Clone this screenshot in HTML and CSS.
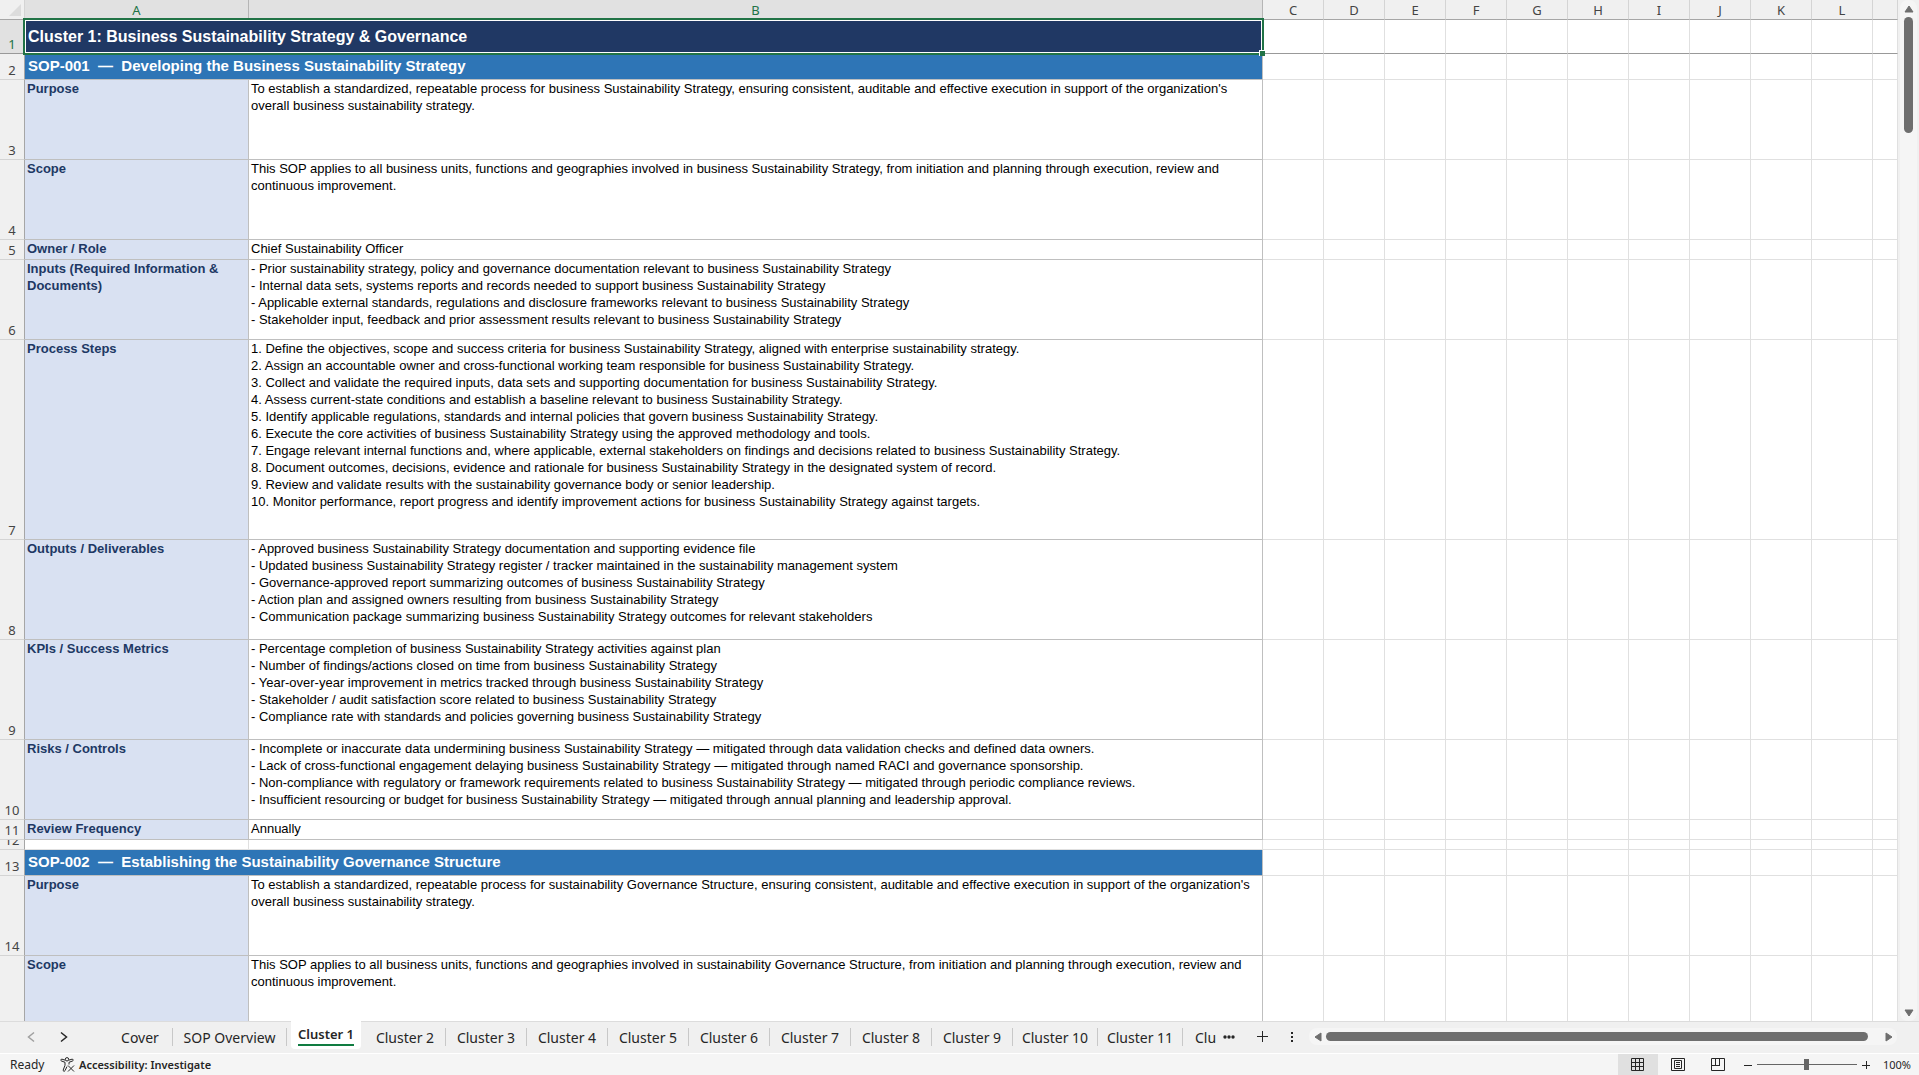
FILE: index.html
```html
<!DOCTYPE html>
<html lang="en">
<head>
<meta charset="utf-8">
<title>Cluster 1</title>
<link rel="stylesheet" href="styles.css">
</head>
<body>
<div class="app">
  <main class="workspace">
    <div class="sheet">
      <table class="grid">
        <colgroup>
          <col class="col-num"><col class="col-a"><col class="col-b">
          <col class="col-std" span="10"><col>
        </colgroup>
        <thead>
          <tr>
            <th class="corner"><svg width="13" height="13" viewBox="0 0 13 13"><path d="M12 0V12H0z" fill="#dcdcdc"/></svg></th>
            <th class="on" scope="col">A</th><th class="on" scope="col">B</th><th scope="col">C</th><th scope="col">D</th><th scope="col">E</th><th scope="col">F</th><th scope="col">G</th><th scope="col">H</th><th scope="col">I</th><th scope="col">J</th><th scope="col">K</th><th scope="col">L</th><th></th>
          </tr>
        </thead>
        <tbody>
          <tr class="h34 frozen"><th class="on" scope="row">1</th><td class="title" colspan="2">Cluster 1: Business Sustainability Strategy &amp; Governance<span class="selection"><span class="handle"></span></span></td><td></td><td></td><td></td><td></td><td></td><td></td><td></td><td></td><td></td><td></td><td></td></tr>
          <tr class="h26"><th scope="row">2</th><td class="band" colspan="2">SOP-001&nbsp; —&nbsp; Developing the Business Sustainability Strategy</td><td></td><td></td><td></td><td></td><td></td><td></td><td></td><td></td><td></td><td></td><td></td></tr>
          <tr class="h80"><th scope="row">3</th><td class="label">Purpose</td><td class="body">To establish a standardized, repeatable process for business Sustainability Strategy, ensuring consistent, auditable and effective execution in support of the organization's<br>overall business sustainability strategy.</td><td></td><td></td><td></td><td></td><td></td><td></td><td></td><td></td><td></td><td></td><td></td></tr>
          <tr class="h80"><th scope="row">4</th><td class="label">Scope</td><td class="body">This SOP applies to all business units, functions and geographies involved in business Sustainability Strategy, from initiation and planning through execution, review and<br>continuous improvement.</td><td></td><td></td><td></td><td></td><td></td><td></td><td></td><td></td><td></td><td></td><td></td></tr>
          <tr class="h20"><th scope="row">5</th><td class="label">Owner / Role</td><td class="body">Chief Sustainability Officer</td><td></td><td></td><td></td><td></td><td></td><td></td><td></td><td></td><td></td><td></td><td></td></tr>
          <tr class="h80"><th scope="row">6</th><td class="label">Inputs (Required Information &amp;<br>Documents)</td><td class="body">- Prior sustainability strategy, policy and governance documentation relevant to business Sustainability Strategy<br>- Internal data sets, systems reports and records needed to support business Sustainability Strategy<br>- Applicable external standards, regulations and disclosure frameworks relevant to business Sustainability Strategy<br>- Stakeholder input, feedback and prior assessment results relevant to business Sustainability Strategy</td><td></td><td></td><td></td><td></td><td></td><td></td><td></td><td></td><td></td><td></td><td></td></tr>
          <tr class="h200"><th scope="row">7</th><td class="label">Process Steps</td><td class="body">1. Define the objectives, scope and success criteria for business Sustainability Strategy, aligned with enterprise sustainability strategy.<br>2. Assign an accountable owner and cross-functional working team responsible for business Sustainability Strategy.<br>3. Collect and validate the required inputs, data sets and supporting documentation for business Sustainability Strategy.<br>4. Assess current-state conditions and establish a baseline relevant to business Sustainability Strategy.<br>5. Identify applicable regulations, standards and internal policies that govern business Sustainability Strategy.<br>6. Execute the core activities of business Sustainability Strategy using the approved methodology and tools.<br>7. Engage relevant internal functions and, where applicable, external stakeholders on findings and decisions related to business Sustainability Strategy.<br>8. Document outcomes, decisions, evidence and rationale for business Sustainability Strategy in the designated system of record.<br>9. Review and validate results with the sustainability governance body or senior leadership.<br>10. Monitor performance, report progress and identify improvement actions for business Sustainability Strategy against targets.</td><td></td><td></td><td></td><td></td><td></td><td></td><td></td><td></td><td></td><td></td><td></td></tr>
          <tr class="h100"><th scope="row">8</th><td class="label">Outputs / Deliverables</td><td class="body">- Approved business Sustainability Strategy documentation and supporting evidence file<br>- Updated business Sustainability Strategy register / tracker maintained in the sustainability management system<br>- Governance-approved report summarizing outcomes of business Sustainability Strategy<br>- Action plan and assigned owners resulting from business Sustainability Strategy<br>- Communication package summarizing business Sustainability Strategy outcomes for relevant stakeholders</td><td></td><td></td><td></td><td></td><td></td><td></td><td></td><td></td><td></td><td></td><td></td></tr>
          <tr class="h100"><th scope="row">9</th><td class="label">KPIs / Success Metrics</td><td class="body">- Percentage completion of business Sustainability Strategy activities against plan<br>- Number of findings/actions closed on time from business Sustainability Strategy<br>- Year-over-year improvement in metrics tracked through business Sustainability Strategy<br>- Stakeholder / audit satisfaction score related to business Sustainability Strategy<br>- Compliance rate with standards and policies governing business Sustainability Strategy</td><td></td><td></td><td></td><td></td><td></td><td></td><td></td><td></td><td></td><td></td><td></td></tr>
          <tr class="h80"><th scope="row">10</th><td class="label">Risks / Controls</td><td class="body">- Incomplete or inaccurate data undermining business Sustainability Strategy — mitigated through data validation checks and defined data owners.<br>- Lack of cross-functional engagement delaying business Sustainability Strategy — mitigated through named RACI and governance sponsorship.<br>- Non-compliance with regulatory or framework requirements related to business Sustainability Strategy — mitigated through periodic compliance reviews.<br>- Insufficient resourcing or budget for business Sustainability Strategy — mitigated through annual planning and leadership approval.</td><td></td><td></td><td></td><td></td><td></td><td></td><td></td><td></td><td></td><td></td><td></td></tr>
          <tr class="h20"><th scope="row">11</th><td class="label">Review Frequency</td><td class="body">Annually</td><td></td><td></td><td></td><td></td><td></td><td></td><td></td><td></td><td></td><td></td><td></td></tr>
          <tr class="h10"><th scope="row"><span class="clip">12</span></th><td></td><td></td><td></td><td></td><td></td><td></td><td></td><td></td><td></td><td></td><td></td><td></td><td></td></tr>
          <tr class="h26"><th scope="row">13</th><td class="band" colspan="2">SOP-002&nbsp; —&nbsp; Establishing the Sustainability Governance Structure</td><td></td><td></td><td></td><td></td><td></td><td></td><td></td><td></td><td></td><td></td><td></td></tr>
          <tr class="h80"><th scope="row">14</th><td class="label">Purpose</td><td class="body">To establish a standardized, repeatable process for sustainability Governance Structure, ensuring consistent, auditable and effective execution in support of the organization's<br>overall business sustainability strategy.</td><td></td><td></td><td></td><td></td><td></td><td></td><td></td><td></td><td></td><td></td><td></td></tr>
          <tr class="h80"><th scope="row"></th><td class="label">Scope</td><td class="body">This SOP applies to all business units, functions and geographies involved in sustainability Governance Structure, from initiation and planning through execution, review and<br>continuous improvement.</td><td></td><td></td><td></td><td></td><td></td><td></td><td></td><td></td><td></td><td></td><td></td></tr>
        </tbody>
      </table>
    </div>
    <div class="vscroll">
      <button class="arrow" aria-label="Scroll up"><svg width="10" height="8" viewBox="0 0 10 8"><path d="M5 1 9 7H1z"/></svg></button>
      <div class="vthumb"></div>
      <button class="arrow" aria-label="Scroll down"><svg width="10" height="8" viewBox="0 0 10 8"><path d="M1 1H9L5 7z"/></svg></button>
    </div>
  </main>

  <nav class="tabs" aria-label="Sheets">
    <div class="tabnav">
      <button aria-label="Previous sheet" disabled><svg width="8" height="12" viewBox="0 0 8 12"><path d="M7 1.500 1.500 6 7 10.500"/></svg></button>
      <button aria-label="Next sheet"><svg width="8" height="12" viewBox="0 0 8 12"><path d="M1 1.500 6.500 6 1 10.500"/></svg></button>
    </div>
    <div class="tablist">
      <button class="tab">Cover</button>
      <button class="tab">SOP Overview</button>
      <button class="tab active"><span>Cluster 1</span></button>
      <button class="tab">Cluster 2</button>
      <button class="tab">Cluster 3</button>
      <button class="tab">Cluster 4</button>
      <button class="tab">Cluster 5</button>
      <button class="tab">Cluster 6</button>
      <button class="tab">Cluster 7</button>
      <button class="tab">Cluster 8</button>
      <button class="tab">Cluster 9</button>
      <button class="tab wide">Cluster 10</button>
      <button class="tab wide">Cluster 11</button>
      <button class="tab cut">Clu</button>
    </div>
    <div class="tabtools">
      <button aria-label="More sheets"><svg width="12" height="4" viewBox="0 0 12 4"><circle cx="2" cy="2" r="1.700"/><circle cx="6" cy="2" r="1.700"/><circle cx="10" cy="2" r="1.700"/></svg></button>
      <button aria-label="New sheet"><svg width="12" height="12" viewBox="0 0 12 12"><path d="M5 0h1v5h5v1H6v5H5V6H0V5h5z"/></svg></button>
      <button aria-label="Resize"><svg width="2" height="10" viewBox="0 0 2 10"><path d="M0 0h2v2H0zM0 4h2v2H0zM0 8h2v2H0z"/></svg></button>
    </div>
    <div class="hscroll">
      <button class="arrow" aria-label="Scroll left"><svg width="8" height="10" viewBox="0 0 8 10"><path d="M7 1V9L1 5z"/></svg></button>
      <div class="hthumb"></div>
      <button class="arrow" aria-label="Scroll right"><svg width="8" height="10" viewBox="0 0 8 10"><path d="M1 1V9L7 5z"/></svg></button>
    </div>
  </nav>

  <footer class="status">
    <span class="ready">Ready</span>
    <button class="access">
      <svg width="15" height="15" viewBox="0 0 15 15" fill="none" stroke="#262626" stroke-width="1"><circle cx="7" cy="2.300" r="1.700"/><path d="M5.300 3.200 2 2.200C.6 2 .3 3.600 1.500 4L5 5.300v3L3.200 13c-.3 1.300 1.200 1.800 1.800.7L7 9.500M8.700 3.200 12 2.200c1.400-.2 1.700 1.400.5 1.800L9 5.300v2.200M8 8.500l6 6M14 8.500l-6 6"/></svg>
      Accessibility: Investigate
    </button>
    <div class="views">
      <button class="view on" aria-label="Normal"><svg width="14" height="14" viewBox="0 0 14 14"><path d="M.5.500h12v12H.5zM4.500.500v12M8.500.500v12M.5 4.500h12M.5 8.500h12"/></svg></button>
      <button class="view" aria-label="Page Layout"><svg width="14" height="14" viewBox="0 0 14 14"><path d="M.5.500h13v12H.5zM3.500 2.500h7v8h-7zM5 4.500h4M5 6.500h4M5 8.500h4"/></svg></button>
      <button class="view" aria-label="Page Break Preview"><svg width="14" height="14" viewBox="0 0 14 14"><path d="M.5.500h13v12H.5zM4.500.500v7M.5 7.500h8.500M8.500.500v7"/></svg></button>
    </div>
    <div class="zoom">
      <button aria-label="Zoom out"><svg width="8" height="8" viewBox="0 0 8 8"><path d="M0 4.500h8"/></svg></button>
      <input type="range" min="0" max="100" value="50" aria-label="Zoom">
      <button aria-label="Zoom in"><svg width="8" height="8" viewBox="0 0 8 8"><path d="M0 4.500h8M4.500 0v8"/></svg></button>
      <span class="pct">100%</span>
    </div>
  </footer>
</div>
</body>
</html>
```
FILE: styles.css
```css
* { box-sizing: border-box; }

body {
  margin: 0;
  font-family: "Noto Sans", sans-serif;
  font-size: 13px;
  color: #262626;
  background: #f0f0f0;
}

button {
  border: 0;
  padding: 0;
  margin: 0;
  background: none;
  font: inherit;
  color: inherit;
  display: flex;
  align-items: center;
  justify-content: center;
}

.app {
  display: flex;
  flex-direction: column;
  height: 100vh;
}

/* Worksheet */
.workspace {
  flex: 1;
  min-height: 0;
  display: flex;
}

.sheet {
  flex: 1;
  min-width: 0;
  overflow: hidden;
  background: #fff;
}

.grid {
  width: 100%;
  table-layout: fixed;
  border-collapse: separate;
  border-spacing: 0;
}

.col-num { width: 25px; }
.col-a { width: 224px; }
.col-b { width: 1014px; }
.col-std { width: 61px; }

.grid td {
  padding: 0;
  vertical-align: top;
  border-right: 1px solid #e0e0e0;
  border-bottom: 1px solid #e0e0e0;
}

.grid th {
  padding: 0;
  font-weight: 400;
  color: #444;
  background: #f0f0f0;
}

.grid thead th {
  height: 20px;
  padding-top: 2px;
  line-height: 17px;
  border-right: 1px solid #d4d4d4;
  border-bottom: 1px solid #a6a6a6;
}

.grid thead .on {
  background: #e1e1e1;
  color: #217346;
  border-right-color: #b5b5b5;
}

.grid thead .corner { text-align: right; line-height: 0; }
.corner svg { margin-right: 2px; }

tbody th {
  vertical-align: bottom;
  line-height: 18px;
  border-right: 1px solid #a6a6a6;
  border-bottom: 1px solid #d4d4d4;
}

.grid tbody .on { background: #e1e1e1; color: #217346; }

.h10 { height: 10px; }
.h20 { height: 20px; }
.h26 { height: 26px; }
.h34 { height: 34px; }
.h80 { height: 80px; }
.h100 { height: 100px; }
.h200 { height: 200px; }

.clip {
  display: flex;
  align-items: flex-end;
  justify-content: center;
  height: 9px;
  overflow: hidden;
}

.grid .frozen > * { border-bottom-color: #999; }

.grid .title,
.grid .band {
  font: bold 16px/33px "Liberation Sans", Arial, sans-serif;
  color: #fff;
  padding-left: 3px;
  white-space: nowrap;
}

.grid .title { background: #203864; position: relative; }

.grid .band {
  background: #2e75b6;
  font-size: 15px;
  line-height: 24px;
  border-color: #bfbfbf;
}

.grid .label,
.grid .body {
  font: 13px/17px "Liberation Sans", Arial, sans-serif;
  color: #000;
  padding: 0 0 0 2px;
  white-space: nowrap;
  border-color: #bfbfbf;
}

.grid .label {
  font-weight: 700;
  color: #203864;
  background: #d9e1f2;
}

.selection {
  position: absolute;
  inset: -2px;
  border: 2px solid #217346;
  outline: 1px solid #fff;
  outline-offset: -3px;
}

.handle {
  position: absolute;
  right: -3px;
  bottom: -3px;
  width: 6px;
  height: 6px;
  background: #217346;
  border: 1px solid #fff;
  border-width: 1px 0 0 1px;
}

/* Scroll bars */
.vscroll {
  width: 17px;
  margin: 0 2px;
  display: flex;
  flex-direction: column;
  align-items: center;
  background: #f5f5f5;
  border-radius: 8px;
}

.arrow { width: 17px; height: 17px; flex: none; }
.arrow svg { fill: #6e6e6e; stroke: #6e6e6e; stroke-linejoin: round; }

.vthumb {
  width: 9px;
  height: 116px;
  margin-bottom: auto;
  border-radius: 5px;
  background: #6e6e6e;
}

/* Sheet tabs */
.tabs {
  height: 32px;
  padding-bottom: 2px;
  display: flex;
  align-items: center;
  border-top: 1px solid #dcdcdc;
  font-size: 14px;
}

.tabnav {
  display: flex;
  gap: 17px;
  padding-left: 23px;
  width: 108px;
}

.tabnav button { width: 16px; height: 20px; }
.tabnav svg { fill: none; stroke: #262626; stroke-width: 1.5; }
.tabnav button:disabled svg { stroke: #a0a0a0; }

.tablist { display: flex; align-self: stretch; }

.tab {
  width: 81px;
  height: 18px;
  margin-top: 6px;
  border-right: 1px solid #c8c8c8;
  white-space: nowrap;
}

.tab:first-child { width: 65px; }
.tab:nth-child(2) { width: 114px; }
.tab.wide { width: 85px; }

.tab.active {
  width: 70px;
  height: 28px;
  margin: -1px 4px 0;
  border: 0;
  border-radius: 0 0 4px 4px;
  background: #fff;
  font-size: 13px;
  font-weight: 600;
}

.tab.active span { border-bottom: 2px solid #107c41; line-height: 20px; }

.tab.cut {
  width: 40px;
  padding-left: 12px;
  border: 0;
  justify-content: flex-start;
}

.tabtools { display: flex; gap: 22px; align-items: center; }
.tabtools svg { fill: #262626; }

.hscroll {
  flex: 1;
  height: 17px;
  margin: 0 22px 0 16px;
  display: flex;
  align-items: center;
  background: #f5f5f5;
  border-radius: 8px;
}

.hthumb {
  flex: 1;
  height: 9px;
  margin-right: 12px;
  border-radius: 5px;
  background: #6e6e6e;
}

/* Status bar */
.status {
  height: 22px;
  display: flex;
  align-items: center;
  background: #f5f5f5;
  border-top: 1px solid #fff;
  font-size: 12px;
}

.ready { padding-left: 10px; width: 60px; }
.access { gap: 4px; font-size: 11px; font-weight: 600; }
.views { display: flex; margin-left: auto; align-self: stretch; }
.view { width: 40px; }
.view.on { background: #e0e0e0; }
.view svg, .zoom svg { fill: none; stroke: #262626; }

.zoom { display: flex; align-items: center; padding: 0 8px 0 6px; gap: 5px; }

.zoom input {
  appearance: none;
  width: 100px;
  height: 11px;
  margin: 0;
  background: linear-gradient(#666, #666) center / 100% 1px no-repeat;
}

.zoom input::-webkit-slider-thumb {
  appearance: none;
  width: 5px;
  height: 11px;
  background: #666;
}

.pct { margin-left: 8px; font-size: 11px; }
```
